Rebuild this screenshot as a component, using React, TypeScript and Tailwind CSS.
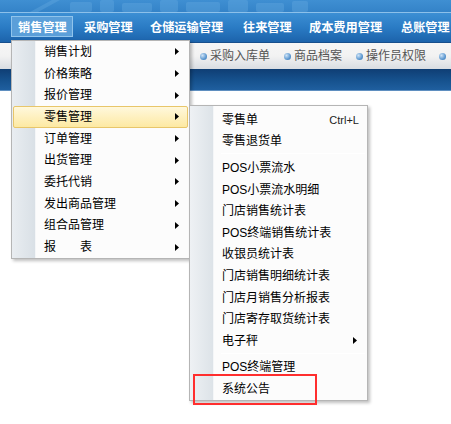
import React from "react";

const Arrow = () => (
  <svg width="4" height="7" viewBox="0 0 4 7" className="block">
    <path d="M0 0 L4 3.5 L0 7 Z" fill="#000" />
  </svg>
);

const leftItems = [
  "销售计划",
  "价格策略",
  "报价管理",
  "零售管理",
  "订单管理",
  "出货管理",
  "委托代销",
  "发出商品管理",
  "组合品管理",
  "报表",
];

type SubItem = { t?: string; k?: string; arrow?: boolean; sep?: boolean };
const subItems: SubItem[] = [
  { t: "零售单", k: "Ctrl+L" },
  { t: "零售退货单" },
  { sep: true },
  { t: "POS小票流水" },
  { t: "POS小票流水明细" },
  { t: "门店销售统计表" },
  { t: "POS终端销售统计表" },
  { t: "收银员统计表" },
  { t: "门店销售明细统计表" },
  { t: "门店月销售分析报表" },
  { t: "门店寄存取货统计表" },
  { t: "电子秤", arrow: true },
  { sep: true },
  { t: "POS终端管理" },
  { t: "系统公告" },
];

const Dot = () => (
  <span className="inline-block w-[7px] h-[7px] rounded-full bg-[radial-gradient(circle_at_35%_35%,#cfe4f7,#5d98d0_60%,#2f6eaf)] mr-[3px]" />
);

const barItems = [
  { t: "销售管理", w: "w-[66px]" },
  { t: "采购管理", w: "w-[66px]" },
  { t: "仓储运输管理", w: "w-[93px]" },
  { t: "往来管理", w: "w-[66px]" },
  { t: "成本费用管理", w: "w-[92px]" },
  { t: "总账管理", w: "w-[60px]" },
];

export default function App() {
  return (
    <div className="relative w-[451px] h-[424px] overflow-hidden bg-white font-['Liberation_Sans','Noto_Sans_CJK_SC',sans-serif] text-[12px] text-black">
      {/* banner */}
      <div className="relative h-[12px] overflow-hidden bg-gradient-to-b from-[#3f8fd2] to-[#3483c8]">
        <svg width="451" height="12" className="absolute left-0 top-0">
          <g fill="#6aaee3" opacity="0.35">
            <path d="M30 12 L52 0 L60 0 L38 12 Z" />
            <rect x="70" y="2" width="22" height="10" rx="2" />
            <rect x="100" y="0" width="14" height="12" rx="2" />
            <rect x="122" y="3" width="30" height="9" rx="2" />
            <rect x="160" y="0" width="18" height="12" rx="2" />
            <rect x="186" y="2" width="34" height="10" rx="2" />
            <rect x="228" y="0" width="20" height="12" rx="2" />
            <rect x="256" y="3" width="28" height="9" rx="2" />
            <rect x="292" y="1" width="16" height="11" rx="2" />
          </g>
        </svg>
      </div>
      <div className="h-[1px] bg-[#8cc0ea]" />
      {/* menu bar */}
      <div className="h-[30px] bg-gradient-to-b from-[#3c8fd4] via-[#2a7bc4] to-[#1c63ab] border-b border-[#174f8c] flex items-start pl-[11px]">
        {barItems.map((b, i) => (
          <div key={b.t} className={"shrink-0 " + b.w}>
            <div
              className={
                "mt-[3px] h-[21px] pl-[6px] flex items-center text-[12.2px] font-bold text-white whitespace-nowrap " +
                (i === 0 ? "w-[62px] bg-[#5b9fd9] border border-[#90c4ec]" : "border border-transparent")
              }
            >
              <span className="pt-[3px]">{b.t}</span>
            </div>
          </div>
        ))}
      </div>
      {/* toolbar */}
      <div className="h-[26px] bg-gradient-to-b from-[#f6f6f6] via-[#f2f2f2] to-[#d9dde2] flex items-center text-[#555] text-[12px] whitespace-nowrap">
        <div className="flex items-center ml-[200px]">
          <Dot />
          <span>采购入库单</span>
        </div>
        <div className="flex items-center ml-[14px]">
          <Dot />
          <span>商品档案</span>
        </div>
        <div className="flex items-center ml-[14px]">
          <Dot />
          <span>操作员权限</span>
        </div>
        <div className="flex items-center ml-[13px]">
          <Dot />
        </div>
      </div>
      {/* dark band */}
      <div className="h-[22px] bg-gradient-to-b from-[#0f3e74] via-[#15508c] to-[#1f5f9f] border-b border-[#5f8fc0]" />

      {/* left menu */}
      <div className="absolute left-[11px] top-[40px] w-[179px] bg-[#fcfcfc] border border-[#b5b5b5] shadow-[2px_2px_3px_rgba(0,0,0,0.25)]">
        <div className="absolute left-0 top-0 bottom-0 w-[24px] bg-gradient-to-r from-[#e9edf1] to-[#d9e0e6] border-r border-[#f4f6f8]" />
        {leftItems.map((t, i) => (
          <div
            key={t}
            className={
              "relative h-[21.7px] flex items-center mx-[1px] " +
              (i === 3
                ? "bg-gradient-to-b from-[#fff8dc] to-[#fde9a2] border border-[#e8c66a] rounded-[2px]"
                : "border border-transparent")
            }
          >
            <span className="ml-[30px] flex-1 whitespace-nowrap">
              {t === "报表" ? (
                <>
                  报<span className="inline-block w-[24px]" />表
                </>
              ) : (
                t
              )}
            </span>
            <span className="mr-[8px]">
              <Arrow />
            </span>
          </div>
        ))}
      </div>

      {/* sub menu */}
      <div className="absolute left-[189px] top-[105px] w-[179px] bg-[#fcfcfc] border border-[#b5b5b5] pt-[3px] shadow-[2px_2px_3px_rgba(0,0,0,0.25)]">
        <div className="absolute left-0 top-0 bottom-0 w-[24px] bg-gradient-to-r from-[#eef1f4] to-[#dde3e8] border-r border-[#f4f6f8]" />
        {subItems.map((s, i) =>
          s.sep ? (
            <div key={i} className="relative h-[5px] flex items-start pl-[31px] pr-[2px]">
              <div className="w-full h-[1px] bg-[#dadfe4] mt-[1px] border-b border-white" />
            </div>
          ) : (
            <div key={i} className="relative h-[21.6px] flex items-center">
              <span className="ml-[32px] flex-1 whitespace-nowrap">{s.t}</span>
              {s.k && <span className="mr-[8px] text-[11px] text-[#222]">{s.k}</span>}
              {s.arrow && (
                <span className="mr-[10px]">
                  <Arrow />
                </span>
              )}
            </div>
          )
        )}
      </div>

      {/* red highlight box */}
      <div className="absolute left-[193px] top-[374px] w-[124px] h-[31px] border-2 border-[#ff2e2e]" />
    </div>
  );
}
